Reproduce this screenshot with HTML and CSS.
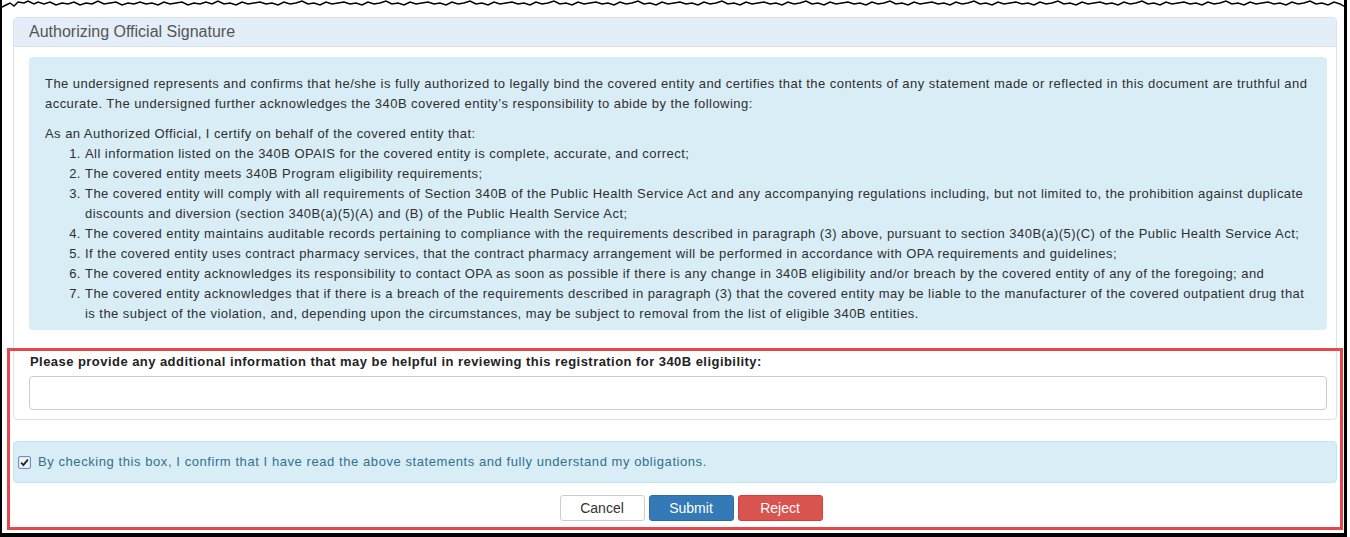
FILE: index.html
```html
<!DOCTYPE html>
<html lang="en">
<head>
<meta charset="utf-8">
<title>Authorizing Official Signature</title>
<link rel="stylesheet" href="styles.css">
</head>
<body>
<div class="frame">
  <svg class="torn" width="1347" height="9" viewBox="0 0 1347 9" preserveAspectRatio="none">
    <polyline fill="none" stroke="#000" stroke-width="1.4" points="0,8 6,5 10,3 14,6 18,2 24,3 28,1 34,4 38,2 44,4 50,2 56,5 62,3 68,4 74,2 80,5 86,3 92,4 98,1 104,4 110,3 116,2 122,5 128,3 134,4 140,2 146,4 152,3 158,5 164,2 170,4 176,3 182,2 188,5 194,3 200,4 206,2 212,4 218,1 224,4 230,3 236,5 242,2 248,4 254,3 260,2 266,4 272,3 278,5 284,2 290,4 296,3 302,1 308,4 314,3 320,5 326,2 332,4 338,3 344,2 350,4 356,3 362,5 368,2 374,4 380,3 386,1 392,4 398,3 404,5 410,2 416,4 422,3 428,2 434,4 440,3 446,5 452,2 458,4 464,3 470,1 476,4 482,3 488,5 494,2 500,4 506,3 512,2 518,4 524,3 530,5 536,2 542,4 548,3 554,1 560,4 566,3 572,5 578,2 584,4 590,3 596,2 602,4 608,3 614,5 620,2 626,4 632,3 638,1 644,4 650,3 656,5 662,2 668,4 674,3 680,2 686,4 692,3 698,5 704,2 710,4 716,3 722,1 728,4 734,3 740,5 746,2 752,4 758,3 764,2 770,4 776,3 782,5 788,2 794,4 800,3 806,1 812,4 818,3 824,5 830,2 836,4 842,3 848,2 854,4 860,3 866,5 872,2 878,4 884,3 890,1 896,4 902,3 908,5 914,2 920,4 926,3 932,2 938,4 944,3 950,5 956,2 962,4 968,3 974,1 980,4 986,3 992,5 998,2 1004,4 1010,3 1016,2 1022,4 1028,3 1034,5 1040,2 1046,4 1052,3 1058,1 1064,4 1070,3 1076,5 1082,2 1088,4 1094,3 1100,2 1106,4 1112,3 1118,5 1124,2 1130,4 1136,3 1142,1 1148,4 1154,3 1160,5 1166,2 1172,4 1178,3 1184,2 1190,4 1196,3 1202,5 1208,2 1214,4 1220,3 1226,1 1232,4 1238,3 1244,5 1250,2 1256,4 1262,3 1268,2 1274,4 1280,3 1286,5 1292,2 1298,4 1304,3 1310,1 1316,4 1322,3 1328,5 1334,2 1340,4 1347,8"/>
  </svg>

  <div class="panel">
    <div class="panel-heading">Authorizing Official Signature</div>
    <div class="panel-body">
      <div class="statement">
        <p class="intro">The undersigned represents and confirms that he/she is fully authorized to legally bind the covered entity and certifies that the contents of any statement made or reflected in this document are truthful and accurate. The undersigned further acknowledges the 340B covered entity’s responsibility to abide by the following:</p>
        <p class="lead">As an Authorized Official, I certify on behalf of the covered entity that:</p>
        <ol class="terms">
          <li>All information listed on the 340B OPAIS for the covered entity is complete, accurate, and correct;</li>
          <li>The covered entity meets 340B Program eligibility requirements;</li>
          <li>The covered entity will comply with all requirements of Section 340B of the Public Health Service Act and any accompanying regulations including, but not limited to, the prohibition against duplicate discounts and diversion (section 340B(a)(5)(A) and (B) of the Public Health Service Act;</li>
          <li>The covered entity maintains auditable records pertaining to compliance with the requirements described in paragraph (3) above, pursuant to section 340B(a)(5)(C) of the Public Health Service Act;</li>
          <li>If the covered entity uses contract pharmacy services, that the contract pharmacy arrangement will be performed in accordance with OPA requirements and guidelines;</li>
          <li>The covered entity acknowledges its responsibility to contact OPA as soon as possible if there is any change in 340B eligibility and/or breach by the covered entity of any of the foregoing; and</li>
          <li>The covered entity acknowledges that if there is a breach of the requirements described in paragraph (3) that the covered entity may be liable to the manufacturer of the covered outpatient drug that is the subject of the violation, and, depending upon the circumstances, may be subject to removal from the list of eligible 340B entities.</li>
        </ol>
      </div>
      <div class="field">
        <label class="field-label" for="info">Please provide any additional information that may be helpful in reviewing this registration for 340B eligibility:</label>
        <input class="field-input" id="info" type="text">
      </div>
    </div>
  </div>

  <div class="confirm">
    <span class="check">
      <svg width="13" height="13" viewBox="0 0 13 13">
        <rect x="0.5" y="0.5" width="12" height="12" rx="1.5" fill="#dfe8f3" stroke="#6f8fc0"/>
        <rect x="2" y="2" width="9" height="9" fill="#eef3f9"/>
        <path d="M3.2 6.6 L5.4 9 L9.8 3.6" fill="none" stroke="#222" stroke-width="1.8"/>
      </svg>
    </span>
    <span class="confirm-text">By checking this box, I confirm that I have read the above statements and fully understand my obligations.</span>
  </div>

  <div class="actions">
    <button class="btn btn-default" type="button">Cancel</button>
    <button class="btn btn-primary" type="button">Submit</button>
    <button class="btn btn-danger" type="button">Reject</button>
  </div>

  <div class="highlight"></div>
</div>
</body>
</html>
```

FILE: styles.css
```css
html, body {
  margin: 0;
  padding: 0;
  background: #fff;
}

body {
  font-family: "Liberation Sans", Arial, sans-serif;
  font-size: 13px;
  line-height: 20px;
  color: #333;
}

.frame {
  position: relative;
  width: 1347px;
  height: 537px;
  box-sizing: border-box;
  border-left: 2px solid #000;
  border-right: 3px solid #000;
  border-bottom: 4px solid #000;
  padding: 17px 7px 0 11px;
  background: #fff;
}

.torn {
  position: absolute;
  top: 0;
  left: -2px;
  background: transparent;
}

.panel {
  width: 1324px;
  box-sizing: border-box;
  border: 1px solid #d9e3ec;
  border-radius: 4px;
  background: #fff;
}

.panel-heading {
  padding: 5px 15px;
  height: 18px;
  line-height: 18px;
  font-size: 16px;
  color: #555;
  background: #e4eef8;
  border-bottom: 1px solid #d9e3ec;
  border-radius: 3px 3px 0 0;
}

.panel-body {
  padding: 10px 9px 9px 15px;
}

.statement {
  background: #d9edf7;
  border-radius: 4px;
  padding: 17px 15px 6px 16px;
  letter-spacing: 0.45px;
  color: #2f2f2f;
}

.statement p {
  margin: 0;
}

.statement .intro {
  margin-bottom: 10px;
}

.terms {
  margin: 0;
  padding-left: 40px;
}

.field {
  padding-top: 22px;
}

.field-label {
  display: block;
  font-weight: bold;
  padding-left: 1px;
  margin-bottom: 4px;
  color: #222;
  letter-spacing: 0.45px;
}

.field-input {
  display: block;
  width: 100%;
  height: 34px;
  box-sizing: border-box;
  border: 1px solid #ccc;
  border-radius: 4px;
  background: #fff;
  margin: 0;
}

.confirm {
  margin-top: 21px;
  width: 1324px;
  height: 42px;
  box-sizing: border-box;
  display: flex;
  align-items: center;
  gap: 7px;
  padding-left: 4px;
  background: #d9edf7;
  border: 1px solid #bce8f1;
  border-radius: 4px;
  color: #31708f;
  letter-spacing: 0.57px;
}

.check {
  display: flex;
  width: 13px;
  height: 13px;
}

.actions {
  display: flex;
  justify-content: center;
  gap: 4px;
  width: 1324px;
  box-sizing: border-box;
  padding-left: 32px;
  margin-top: 12px;
}

.btn {
  width: 85px;
  height: 26px;
  box-sizing: border-box;
  border: 1px solid transparent;
  border-radius: 3px;
  font-family: "Liberation Sans", Arial, sans-serif;
  font-size: 14px;
  line-height: 18px;
  padding: 3px 6px;
  margin: 0;
}

.btn-default {
  background: #fff;
  border-color: #ccc;
  color: #333;
}

.btn-primary {
  background: #337ab7;
  border-color: #2e6da4;
  color: #fff;
}

.btn-danger {
  background: #d9534f;
  border-color: #d43f3a;
  color: #fff;
}

.highlight {
  position: absolute;
  left: 5px;
  top: 348px;
  width: 1336px;
  height: 182px;
  box-sizing: border-box;
  border: 3px solid #e5474a;
  pointer-events: none;
}
```
